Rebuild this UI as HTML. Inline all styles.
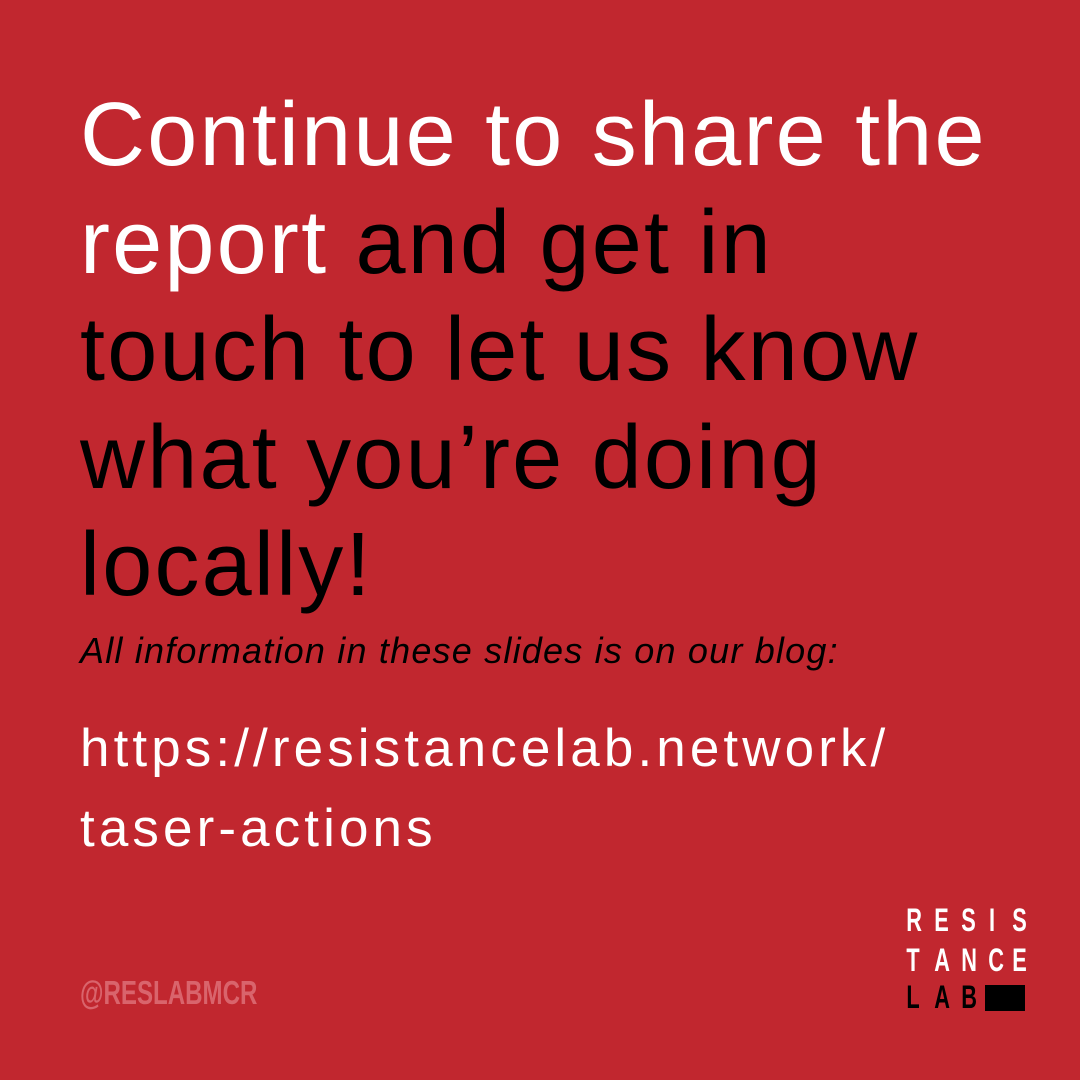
<!DOCTYPE html>
<html><head><style>
body{margin:0;width:1080px;height:1080px;background:#c1272f;font-family:"Liberation Sans",sans-serif;position:relative;overflow:hidden}
.h{position:absolute;left:80px;top:82px;font-size:90px;line-height:107.5px;color:#000;letter-spacing:2.2px}
.w{color:#fff}
.i{position:absolute;left:80px;top:630px;font-size:36px;font-style:italic;color:#000;letter-spacing:1.2px}
.u{position:absolute;left:80px;top:709px;font-size:53px;line-height:80px;color:#fff;letter-spacing:4.1px}
.hd{position:absolute;left:80px;top:974px;font-size:33px;font-weight:bold;color:#d9646c;transform:scaleX(0.73);transform-origin:left}
.l{position:absolute;font-size:32px;line-height:1;font-weight:bold}
.l span{position:absolute;width:20px;text-align:center;transform:scaleX(0.68)}
</style></head><body>
<div class="h"><span class="w">Continue to share the<br>report</span> and get in<br>touch to let us know<br>what you’re doing<br>locally!</div>
<div class="i">All information in these slides is on our blog:</div>
<div class="u">https://resistancelab.network/<br>taser-actions</div>
<div class="hd">@RESLABMCR</div>
<div class="l" style="left:903px;top:904px;color:#fff"><span style="left:0">R</span><span style="left:28px">E</span><span style="left:55px">S</span><span style="left:79px">I</span><span style="left:106px">S</span></div>
<div class="l" style="left:903px;top:944px;color:#fff"><span style="left:0">T</span><span style="left:28px">A</span><span style="left:55px">N</span><span style="left:82px">C</span><span style="left:106px">E</span></div>
<div class="l" style="left:903px;top:981px;color:#000"><span style="left:0">L</span><span style="left:28px">A</span><span style="left:55px">B</span></div>
<div style="position:absolute;left:985px;top:985px;width:40px;height:26px;background:#000"></div>
</body></html>
